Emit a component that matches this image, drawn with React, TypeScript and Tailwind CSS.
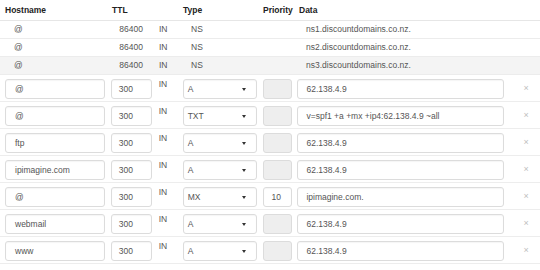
import React from "react";

const nsRows = [
  { host: "@", ttl: "86400", data: "ns1.discountdomains.co.nz." },
  { host: "@", ttl: "86400", data: "ns2.discountdomains.co.nz." },
  { host: "@", ttl: "86400", data: "ns3.discountdomains.co.nz." },
];

const records = [
  { host: "@", type: "A", prio: "", data: "62.138.4.9" },
  { host: "@", type: "TXT", prio: "", data: "v=spf1 +a +mx +ip4:62.138.4.9 ~all" },
  { host: "ftp", type: "A", prio: "", data: "62.138.4.9" },
  { host: "ipimagine.com", type: "A", prio: "", data: "62.138.4.9" },
  { host: "@", type: "MX", prio: "10", data: "ipimagine.com." },
  { host: "webmail", type: "A", prio: "", data: "62.138.4.9" },
  { host: "www", type: "A", prio: "", data: "62.138.4.9" },
];

const box =
  "flex h-[20px] items-center rounded-[3px] border border-[#dcdcdc] bg-white shadow-[inset_0_1px_1px_rgba(0,0,0,0.04)]";

export default function App() {
  return (
    <div
      className="h-[270px] w-[540px] overflow-hidden bg-white text-[8.5px] text-[#555]"
      style={{ fontFamily: '"Liberation Sans", Arial, Helvetica, sans-serif' }}
    >
      <div className="flex h-[21px] items-center border-b border-[#e6e6e6] font-bold text-[#222]">
        <div className="w-[111px] pl-[5px]">Hostname</div>
        <div className="w-[47px] pl-[1px]">TTL</div>
        <div className="w-[25px]" />
        <div className="w-[80px]">Type</div>
        <div className="w-[35px]">Priority</div>
        <div className="pl-[1px]">Data</div>
      </div>

      {nsRows.map((r, i) => (
        <div
          key={i}
          className={
            "flex h-[18px] items-center border-b border-[#ececec] " +
            (i === 2 ? "bg-[#f4f4f4]" : "bg-white")
          }
        >
          <div className="w-[111px] pl-[14px]">{r.host}</div>
          <div className="w-[47px] pr-[15px] text-right">{r.ttl}</div>
          <div className="w-[25px] pl-[1px]">IN</div>
          <div className="w-[80px] pl-[8px]">NS</div>
          <div className="w-[35px]" />
          <div className="pl-[8px]">{r.data}</div>
        </div>
      ))}

      {records.map((r, i) => (
        <div key={i} className="flex items-start border-b border-[#ededed] pb-[2px] pt-[4px]">
          <div className="w-[111px] pl-[5px]">
            <div className={box + " w-[100px] px-[9px]"}>{r.host}</div>
          </div>
          <div className="w-[47px]">
            <div className={box + " w-[41px] px-[7px]"}>300</div>
          </div>
          <div className="w-[25px] pl-[1px] pt-[1px] leading-none">IN</div>
          <div className="w-[80px]">
            <div className={box + " w-[74px] justify-between pl-[4px] pr-[10px]"}>
              <span>{r.type}</span>
              <svg width="4" height="3" viewBox="0 0 4 3">
                <path d="M0 0h4L2 3z" fill="#333" />
              </svg>
            </div>
          </div>
          <div className="w-[35px]">
            {r.prio ? (
              <div className={box + " w-[29px] px-[8px]"}>{r.prio}</div>
            ) : (
              <div className="h-[20px] w-[29px] rounded-[3px] border border-[#dcdcdc] bg-[#eeeeee]" />
            )}
          </div>
          <div className="w-[215px]">
            <div className={box + " w-[207px] px-[8px]"}>{r.data}</div>
          </div>
          <div className="flex h-[20px] w-[28px] items-center justify-center text-[9px] text-[#c0c0c0]">
            ×
          </div>
        </div>
      ))}
    </div>
  );
}
